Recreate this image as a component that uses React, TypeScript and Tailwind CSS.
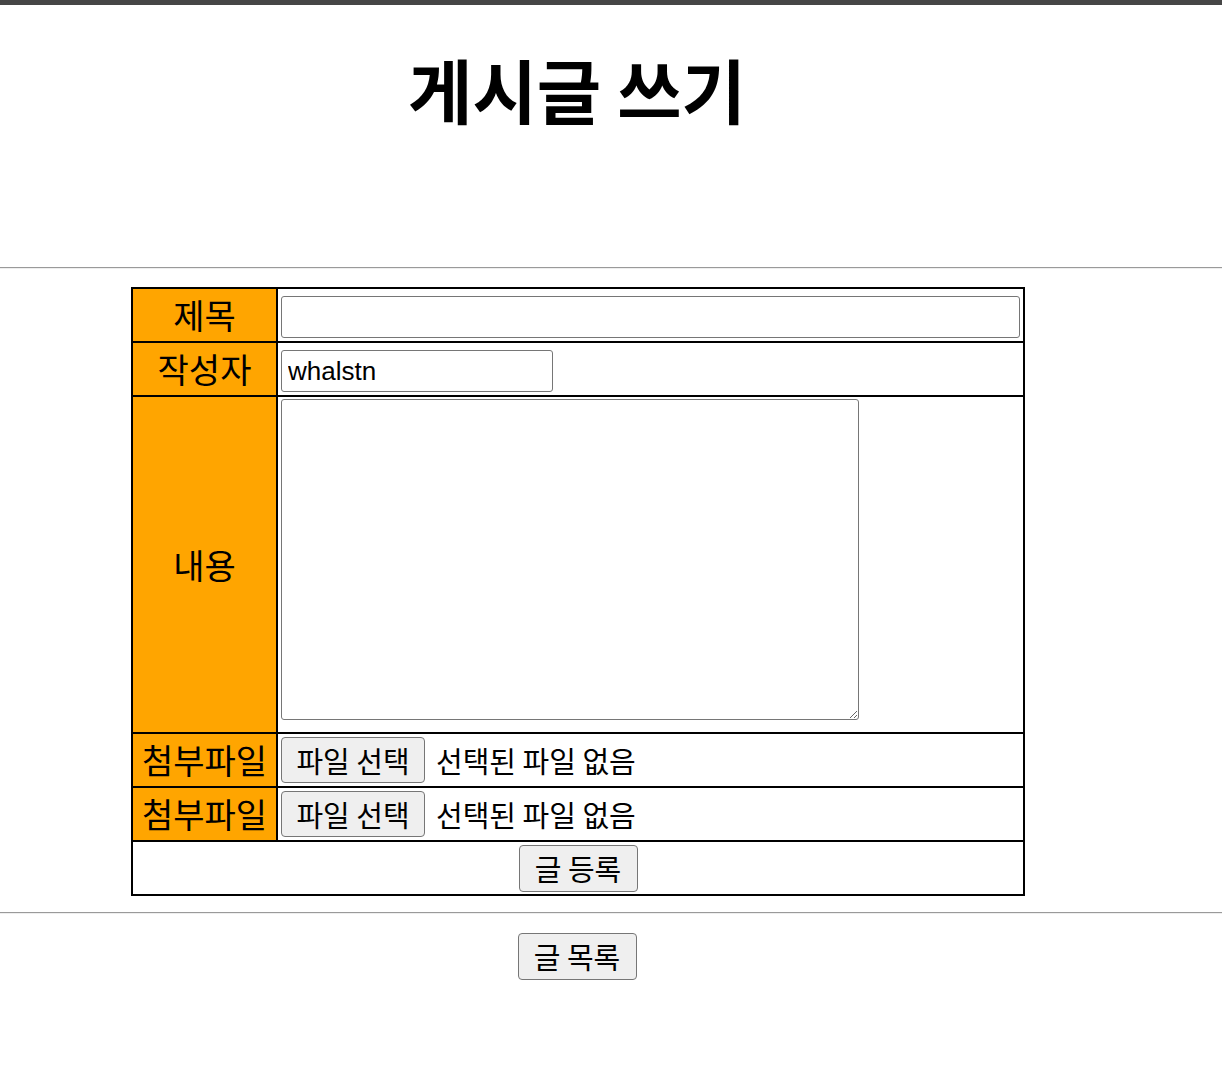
import React from "react";

const kr = "font-['Noto_Sans_CJK_KR','Noto_Sans',sans-serif]";

function FileRow() {
  return (
    <>
      <div className="border-r-2 border-b-2 border-black bg-[#ffa500] h-[54px] flex items-center justify-center text-[34px] leading-none text-black">
        첨부파일
      </div>
      <div className="border-r-2 border-b-2 border-black h-[54px] flex items-center pl-[3px]">
        <button className="w-[144px] h-[46px] bg-[#efefef] border border-[#767676] rounded-[4px] text-[29px] leading-none text-black">
          파일 선택
        </button>
        <span className="ml-[11px] text-[29px] leading-none text-black">선택된 파일 없음</span>
      </div>
    </>
  );
}

export default function App() {
  return (
    <div className={`w-[1222px] min-h-[1076px] bg-white ${kr}`}>
      <div className="h-[5px] bg-[#464646]" />
      <div className="w-[1154px] h-[262px] text-center pt-[42px]">
        <h1 className="text-[70px] leading-[1.2] font-bold text-black">게시글 쓰기</h1>
      </div>
      <div className="h-[2px] border-t border-[#9a9a9a] border-b border-b-[#eeeeee]" />
      <div className="pt-[18px] pl-[131px]">
        <div className="w-[894px] grid grid-cols-[145px_747px] border-l-2 border-t-2 border-black">
          <div className="border-r-2 border-b-2 border-black bg-[#ffa500] h-[54px] flex items-center justify-center text-[34px] leading-none text-black">
            제목
          </div>
          <div className="border-r-2 border-b-2 border-black h-[54px] flex items-center pl-[3px] pt-[4px]">
            <input
              type="text"
              className="w-[739px] h-[42px] border border-[#767676] rounded-[3px] px-[6px] text-[26px] font-['Liberation_Sans',sans-serif] outline-none"
            />
          </div>

          <div className="border-r-2 border-b-2 border-black bg-[#ffa500] h-[54px] flex items-center justify-center text-[34px] leading-none text-black">
            작성자
          </div>
          <div className="border-r-2 border-b-2 border-black h-[54px] flex items-center pl-[3px] pt-[4px]">
            <input
              type="text"
              defaultValue="whalstn"
              className="w-[272px] h-[42px] border border-[#767676] rounded-[3px] px-[6px] text-[26px] text-black font-['Liberation_Sans',sans-serif] outline-none"
            />
          </div>

          <div className="border-r-2 border-b-2 border-black bg-[#ffa500] h-[337px] flex items-center justify-center text-[34px] leading-none text-black">
            내용
          </div>
          <div className="border-r-2 border-b-2 border-black h-[337px] pl-[3px] pt-[2px]">
            <textarea className="block w-[578px] h-[321px] border border-[#767676] rounded-[3px] outline-none resize" />
          </div>

          <FileRow />
          <FileRow />

          <div className="col-span-2 border-r-2 border-b-2 border-black h-[54px] flex items-center justify-center">
            <button className="w-[119px] h-[47px] bg-[#efefef] border border-[#767676] rounded-[4px] text-[29px] leading-none text-black">
              글 등록
            </button>
          </div>
        </div>
      </div>
      <div className="mt-[16px] h-[2px] border-t border-[#9a9a9a] border-b border-b-[#eeeeee]" />
      <div className="w-[1154px] flex justify-center pt-[19px]">
        <button className="w-[119px] h-[47px] bg-[#efefef] border border-[#767676] rounded-[4px] text-[29px] leading-none text-black">
          글 목록
        </button>
      </div>
    </div>
  );
}
